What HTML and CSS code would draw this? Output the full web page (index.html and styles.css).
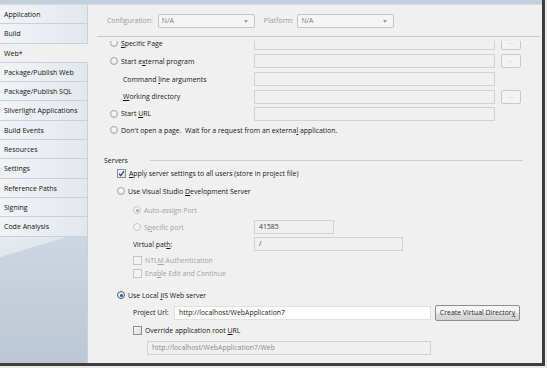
FILE: index.html
```html
<!DOCTYPE html>
<html lang="en">
<head>
  <meta charset="UTF-8">
  <title>Web Properties</title>
  <link rel="stylesheet" href="styles.css">
</head>
<body>
  <div class="window">
    <div class="topbar"></div>
    <div class="body-row">
      <nav class="sidebar">
        <div class="tab">Application</div>
        <div class="tab">Build</div>
        <div class="tab active">Web*</div>
        <div class="tab">Package/Publish Web</div>
        <div class="tab">Package/Publish SQL</div>
        <div class="tab">Silverlight Applications</div>
        <div class="tab">Build Events</div>
        <div class="tab">Resources</div>
        <div class="tab">Settings</div>
        <div class="tab">Reference Paths</div>
        <div class="tab">Signing</div>
        <div class="tab">Code Analysis</div>
        <div class="sidebar-fill"></div>
      </nav>

      <main class="panel">
        <div class="config-bar">
          <span class="dim">Configuration:</span>
          <div class="select config-select">N/A<span class="arrow"></span></div>
          <span class="dim platform-label">Platform:</span>
          <div class="select platform-select">N/A<span class="arrow"></span></div>
        </div>

        <div class="scroll">
          <div class="scroll-inner">
            <div class="row h18">
              <div class="lead in-radio"><span class="radio"></span><span><u>S</u>pecific Page</span></div>
              <div class="field wide"></div>
              <div class="dots">...</div>
            </div>
            <div class="row h18">
              <div class="lead in-radio"><span class="radio"></span><span>Start e<u>x</u>ternal program</span></div>
              <div class="field wide"></div>
              <div class="dots">...</div>
            </div>
            <div class="row h18">
              <div class="lead in-label"><span>Command <u>l</u>ine arguments</span></div>
              <div class="field wide"></div>
            </div>
            <div class="row h17">
              <div class="lead in-label"><span><u>W</u>orking directory</span></div>
              <div class="field wide"></div>
              <div class="dots">...</div>
            </div>
            <div class="row h17">
              <div class="lead in-radio"><span class="radio"></span><span>Start <u>U</u>RL</span></div>
              <div class="field wide"></div>
            </div>
            <div class="row h16">
              <div class="lead in-radio"><span class="radio"></span><span>Don't open a page.&nbsp; Wait for a request from an externa<u>l</u> application.</span></div>
            </div>

            <div class="servers">
              <span>Servers</span>
              <span class="rule"></span>
            </div>
            <div class="row h13">
              <div class="lead in-1">
                <span class="check">
                  <svg width="7" height="7" viewBox="0 0 7 7"><path d="M1 3.6 L2.8 5.6 L6 1" fill="none" stroke="#25477d" stroke-width="1.3"/></svg>
                </span>
                <span><u>A</u>pply server settings to all users (store in project file)</span>
              </div>
            </div>
            <div class="row h22">
              <div class="lead in-1"><span class="radio"></span><span>Use Visual Studio <u>D</u>evelopment Server</span></div>
            </div>
            <div class="row h16 disabled">
              <div class="lead in-2"><span class="radio dot-grey"></span><span>Auto-assign Port</span></div>
            </div>
            <div class="row h18 disabled">
              <div class="lead in-2"><span class="radio"></span><span>S<u>p</u>ecific port</span></div>
              <div class="field port">41585</div>
            </div>
            <div class="row h16">
              <div class="lead in-2"><span>Virtual pat<u>h</u>:</span></div>
              <div class="field vpath">/</div>
            </div>
            <div class="row h13 gap2 disabled">
              <div class="lead in-2"><span class="check"></span><span>NTL<u>M</u> Authentication</span></div>
            </div>
            <div class="row h12 disabled">
              <div class="lead in-2"><span class="check"></span><span>Ena<u>b</u>le Edit and Continue</span></div>
            </div>
            <div class="row h18 gap7">
              <div class="lead in-1"><span class="radio dot-blue"></span><span>Use Local <u>I</u>IS Web server</span></div>
            </div>
            <div class="row h17">
              <div class="lead url-label"><span>Project Url:</span></div>
              <div class="field live">http://localhost/WebApplication7</div>
              <button class="btn">Create Virtual Director<u>y</u></button>
            </div>
            <div class="row h18">
              <div class="lead in-2"><span class="check"></span><span>Override application root <u>U</u>RL</span></div>
            </div>
            <div class="row h18">
              <div class="field root-url">http://localhost/WebApplication7/Web</div>
            </div>
          </div>
        </div>
      </main>
    </div>
  </div>
</body>
</html>
```

FILE: styles.css
```css
* {
  margin: 0;
  padding: 0;
  box-sizing: border-box;
}

body {
  background: #e9e9e9;
  font-family: "Open Sans", "Noto Sans", Arial, sans-serif;
  font-size: 6.9px;
  color: #151515;
}

u {
  text-decoration: underline;
  text-underline-offset: 1px;
}

.window {
  width: 545px;
  height: 366px;
  display: flex;
  flex-direction: column;
  border-right: 3px solid #3d3d3d;
  border-bottom: 3px solid #3d3d3d;
  overflow: hidden;
}

.topbar {
  height: 5px;
  background: #c4cfdc;
  border-bottom: 1px solid #d6dde6;
  flex: none;
}

.body-row {
  flex: 1;
  display: flex;
  min-height: 0;
}

/* sidebar */
.sidebar {
  width: 88px;
  flex: none;
  display: flex;
  flex-direction: column;
  background: #f0f0f0;
}

.tab {
  height: 19.3px;
  line-height: 19px;
  padding-left: 4px;
  border-bottom: 1px solid #c9d0da;
  border-right: 1px solid #c9d0da;
  background: linear-gradient(90deg, #f1f3f6, #e3e8ee);
  white-space: nowrap;
  color: #111;
  font-size: 7px;
}

.tab.active {
  background: #f0f0f0;
  border-right-color: #f0f0f0;
}

.sidebar-fill {
  flex: 1;
  border-right: 1px solid #c9d0da;
  background:
    linear-gradient(163deg, #e7ebf0 0, #e2e7ee 13%, transparent 13.5%),
    linear-gradient(180deg, #cdd6e1, #bcc7d5);
}

/* right panel */
.panel {
  flex: 1;
  display: flex;
  flex-direction: column;
  background: #f0f0f0;
  min-width: 0;
}

.config-bar {
  height: 32px;
  flex: none;
  display: flex;
  align-items: center;
  padding: 0 0 0 10px;
  margin-left: 9px;
  margin-right: 2px;
  border-bottom: 1px solid #c8c8c8;
}

.dim {
  color: #9a9a9a;
}

.select {
  position: relative;
  height: 14px;
  line-height: 12px;
  padding-left: 3px;
  border: 1px solid #c5c5c5;
  border-radius: 2px;
  background: #f5f5f5;
  color: #7a7a7a;
}

.config-select {
  width: 97px;
  margin-left: 5px;
}

.platform-label {
  margin-left: 9px;
}

.platform-select {
  width: 97px;
  margin-left: 4px;
}

.arrow {
  position: absolute;
  right: 6px;
  top: 5px;
  border-left: 2.5px solid transparent;
  border-right: 2.5px solid transparent;
  border-top: 3px solid #9a9a9a;
}

.scroll {
  flex: 1;
  margin-top: 4px;
  overflow: hidden;
}

.scroll-inner {
  margin-top: -7px;
}

.row {
  display: flex;
  align-items: center;
  white-space: nowrap;
}

.h12 { height: 12px; }
.h13 { height: 13px; }
.h16 { height: 16px; }
.h17 { height: 17px; }
.h18 { height: 18px; }
.h22 { height: 22px; }
.gap2 { margin-top: 2px; }
.gap7 { margin-top: 7px; }

.lead {
  width: 166px;
  flex: none;
  display: flex;
  align-items: center;
}

.in-radio { padding-left: 22px; }
.in-label { padding-left: 35px; }
.in-1 { padding-left: 29px; }
.in-2 { padding-left: 45px; }
.url-label {
  width: 86px;
  padding-left: 45px;
}

.disabled .lead {
  color: #a3a3a3;
}

.radio {
  width: 8px;
  height: 8px;
  border-radius: 50%;
  border: 1px solid #a5a5a5;
  background: radial-gradient(circle at 50% 40%, #ffffff, #d9d9d9);
  margin-right: 3px;
  flex: none;
  position: relative;
}

.disabled .radio {
  border-color: #c8c8c8;
  background: #f4f4f4;
}

.dot-grey::after,
.dot-blue::after {
  content: "";
  position: absolute;
  left: 1.5px;
  top: 1.5px;
  width: 3px;
  height: 3px;
  border-radius: 50%;
  background: #a8a8a8;
}

.dot-blue {
  border-color: #4a6078;
}

.dot-blue::after {
  background: #1c5fa8;
}

.check {
  width: 9px;
  height: 9px;
  border: 1px solid #8e8f8f;
  background: linear-gradient(135deg, #f6f6f6, #dedede);
  margin-right: 3px;
  flex: none;
  display: flex;
  align-items: center;
  justify-content: center;
}

.disabled .check {
  border-color: #c6c6c6;
  background: #f3f3f3;
}

.field {
  height: 14px;
  line-height: 12px;
  padding-left: 4px;
  border: 1px solid #d2d2d2;
  background: #f0f0f0;
  color: #3a3a3a;
  flex: none;
}

.wide { width: 241px; }
.port { width: 80px; }
.vpath { width: 149px; }

.live {
  width: 257px;
  background: #ffffff;
  border-color: #e0e0e0;
  color: #1a1a1a;
}

.root-url {
  width: 284px;
  margin-left: 59px;
  color: #8a8a8a;
}

.dots {
  width: 20px;
  height: 14px;
  margin-left: 6px;
  border: 1px solid #c9c9c9;
  border-radius: 2px;
  background: #f3f3f3;
  color: #b0b0b0;
  font-size: 6px;
  line-height: 10px;
  text-align: center;
}

.servers {
  height: 14px;
  margin-top: 15px;
  padding-left: 16px;
  display: flex;
  align-items: center;
}

.rule {
  width: 373px;
  margin-left: 22px;
  border-top: 1px solid #cdcdcd;
}

.btn {
  width: 85px;
  height: 16px;
  margin-left: 4px;
  border: 1px solid #8d8d8d;
  border-radius: 2px;
  background: linear-gradient(#f5f5f5 45%, #dcdcdc 55%, #d3d3d3);
  font-family: inherit;
  font-size: 6.9px;
  color: #1f1f1f;
}
```
